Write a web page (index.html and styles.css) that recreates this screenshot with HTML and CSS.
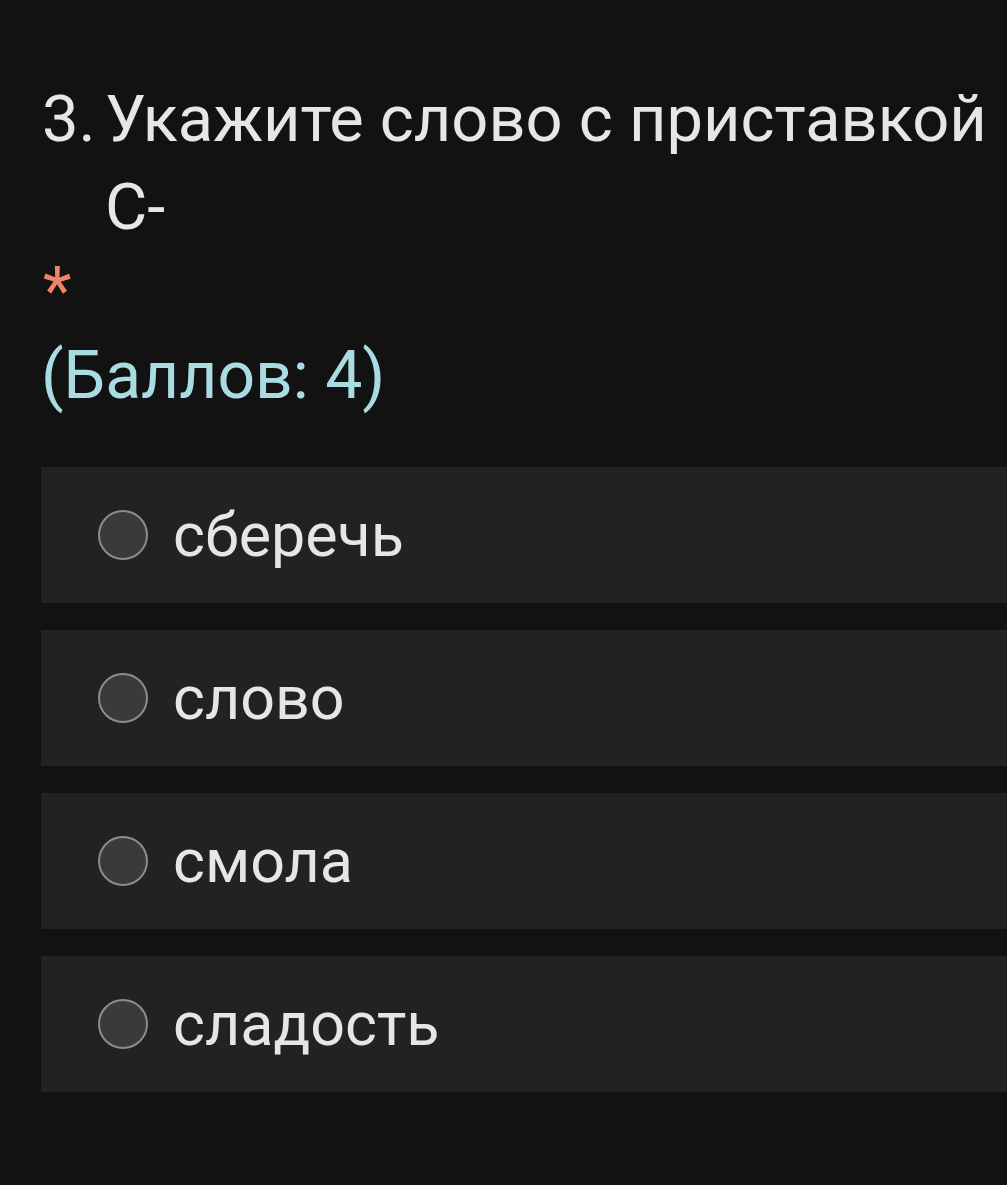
FILE: index.html
```html
<!DOCTYPE html>
<html lang="ru">
<head>
  <meta charset="UTF-8">
  <title>Вопрос 3</title>
  <link rel="stylesheet" href="styles.css">
</head>
<body>

  <div class="question">
    <div class="title">
      <span class="num">3.</span>
      <span class="text">Укажите слово с приставкой С-</span>
    </div>
    <div class="required">*</div>
    <div class="points">(Баллов: 4)</div>

    <!-- варианты ответа -->
    <div class="options">
      <label class="option"><span class="radio"></span><span>сберечь</span></label>
      <label class="option"><span class="radio"></span><span>слово</span></label>
      <label class="option"><span class="radio"></span><span>смола</span></label>
      <label class="option"><span class="radio"></span><span>сладость</span></label>
    </div>
  </div>

</body>
</html>
```

FILE: styles.css
```css
body {
  margin: 0;
  background-color: #121212;
  color: #e6e6e6;
  font-family: Roboto, "Noto Sans", sans-serif;
}
.question {
  padding: 75px 0 0 41px;
}
.title {
  display: flex;
  font-size: 65px;
  line-height: 88px;
}
.num {
  width: 63px;
  flex-shrink: 0;
  padding-left: 1px;
}
.required {
  color: #f08466;
  font-size: 66px;
  line-height: 81px;
  padding-left: 2px;
}
.points {
  color: #a9dbe2;
  font-size: 66px;
  line-height: 88px;
}
.options {
  margin-top: 47px;
  display: flex;
  flex-direction: column;
  gap: 27px;
}
.option {
  display: flex;
  align-items: center;
  height: 136px;
  background-color: #222222;
  padding-left: 57px;
  font-size: 61px;
}
.radio {
  width: 46px;
  height: 46px;
  border: 2px solid #8c8c8c;
  border-radius: 50%;
  background-color: #3a3a3a;
  margin-right: 25px;
  flex-shrink: 0;
}
```
